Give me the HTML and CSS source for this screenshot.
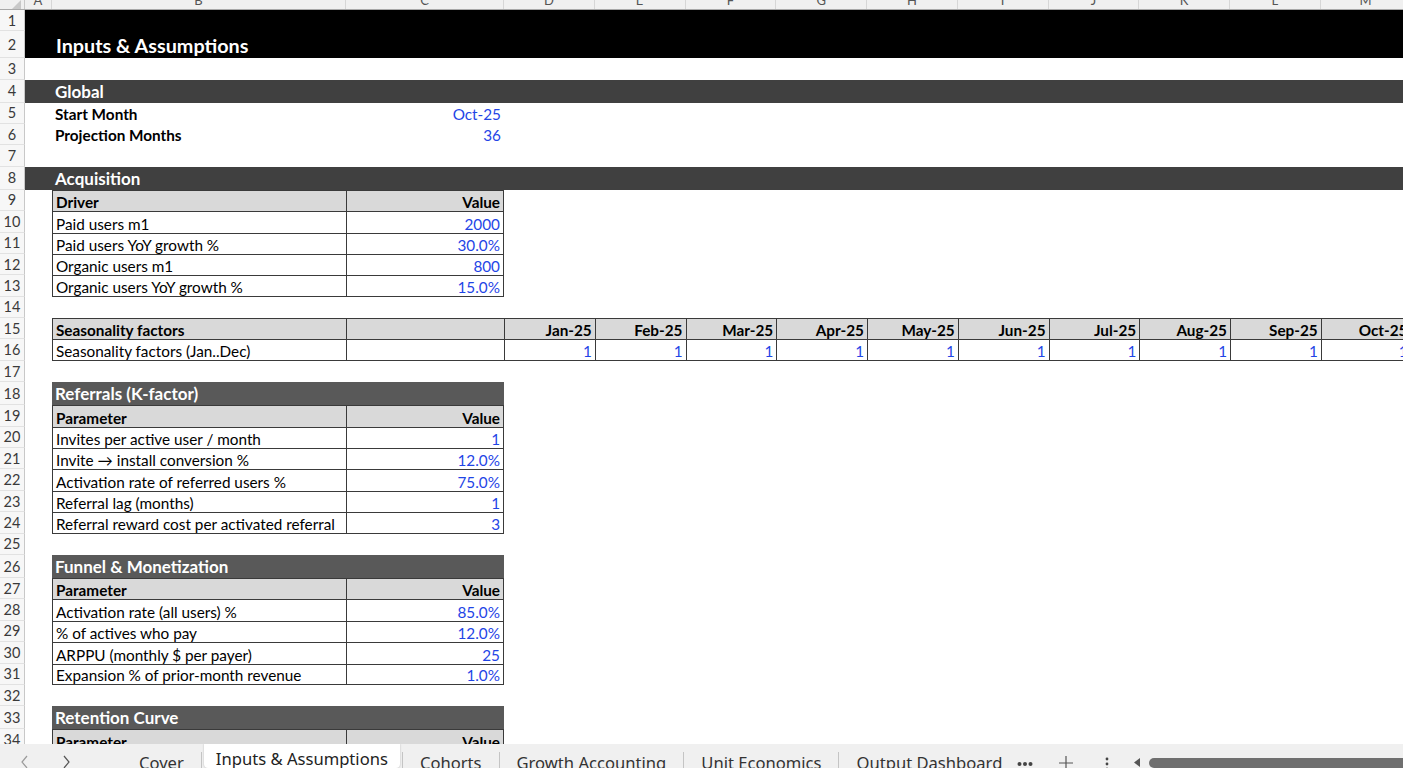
FILE: index.html
```html
<!DOCTYPE html>
<html>
<head>
<meta charset="utf-8">
<link rel="stylesheet" href="styles.css">
</head>
<body>
<div class="app">
  <div class="sheet">
    <div class="row colhdr">
      <div class="corner"><svg width="14" height="9" viewBox="0 0 14 9"><polygon points="13,0 13,9 4,9" fill="#c8c8c8"/></svg></div>
      <div class="ch"><span>A</span></div><div class="ch"><span>B</span></div><div class="ch"><span>C</span></div>
      <div class="ch"><span>D</span></div><div class="ch"><span>E</span></div><div class="ch"><span>F</span></div>
      <div class="ch"><span>G</span></div><div class="ch"><span>H</span></div><div class="ch"><span>I</span></div>
      <div class="ch"><span>J</span></div><div class="ch"><span>K</span></div><div class="ch"><span>L</span></div>
      <div class="ch"><span>M</span></div>
    </div>

    <div class="row r1"><div class="rn">1</div><div class="c black span-all"></div></div>
    <div class="row r2"><div class="rn">2</div><div class="c black span-all title">Inputs &amp; Assumptions</div></div>
    <div class="row r3"><div class="rn">3</div></div>
    <div class="row hdr"><div class="rn">4</div><div class="c bar span-all">Global</div></div>
    <div class="row"><div class="rn">5</div><div class="c"></div><div class="c bold">Start Month</div><div class="c rt blue">Oct-25</div></div>
    <div class="row"><div class="rn">6</div><div class="c"></div><div class="c bold">Projection Months</div><div class="c rt blue">36</div></div>
    <div class="row"><div class="rn">7</div></div>
    <div class="row hdr"><div class="rn">8</div><div class="c bar span-all">Acquisition</div></div>
    <div class="row"><div class="rn">9</div><div class="c"></div><div class="c t th">Driver</div><div class="c t th rt end">Value</div></div>
    <div class="row"><div class="rn">10</div><div class="c"></div><div class="c t">Paid users m1</div><div class="c t rt blue end">2000</div></div>
    <div class="row"><div class="rn">11</div><div class="c"></div><div class="c t">Paid users YoY growth %</div><div class="c t rt blue end">30.0%</div></div>
    <div class="row"><div class="rn">12</div><div class="c"></div><div class="c t">Organic users m1</div><div class="c t rt blue end">800</div></div>
    <div class="row last"><div class="rn">13</div><div class="c"></div><div class="c t">Organic users YoY growth %</div><div class="c t rt blue end">15.0%</div></div>
    <div class="row"><div class="rn">14</div></div>
    <div class="row"><div class="rn">15</div><div class="c"></div><div class="c t th">Seasonality factors</div><div class="c t th"></div>
      <div class="c t th rt">Jan-25</div><div class="c t th rt">Feb-25</div><div class="c t th rt">Mar-25</div><div class="c t th rt">Apr-25</div><div class="c t th rt">May-25</div>
      <div class="c t th rt">Jun-25</div><div class="c t th rt">Jul-25</div><div class="c t th rt">Aug-25</div><div class="c t th rt">Sep-25</div><div class="c t th rt end">Oct-25</div>
    </div>
    <div class="row last"><div class="rn">16</div><div class="c"></div><div class="c t">Seasonality factors (Jan..Dec)</div><div class="c t"></div>
      <div class="c t rt blue">1</div><div class="c t rt blue">1</div><div class="c t rt blue">1</div><div class="c t rt blue">1</div><div class="c t rt blue">1</div>
      <div class="c t rt blue">1</div><div class="c t rt blue">1</div><div class="c t rt blue">1</div><div class="c t rt blue">1</div><div class="c t rt blue end">1</div>
    </div>
    <div class="row"><div class="rn">17</div></div>
    <div class="row hdr"><div class="rn">18</div><div class="c"></div><div class="c bar2 span-bc">Referrals (K-factor)</div></div>
    <div class="row"><div class="rn">19</div><div class="c"></div><div class="c t th">Parameter</div><div class="c t th rt end">Value</div></div>
    <div class="row"><div class="rn">20</div><div class="c"></div><div class="c t">Invites per active user / month</div><div class="c t rt blue end">1</div></div>
    <div class="row"><div class="rn">21</div><div class="c"></div><div class="c t">Invite → install conversion %</div><div class="c t rt blue end">12.0%</div></div>
    <div class="row"><div class="rn">22</div><div class="c"></div><div class="c t">Activation rate of referred users %</div><div class="c t rt blue end">75.0%</div></div>
    <div class="row"><div class="rn">23</div><div class="c"></div><div class="c t">Referral lag (months)</div><div class="c t rt blue end">1</div></div>
    <div class="row last"><div class="rn">24</div><div class="c"></div><div class="c t">Referral reward cost per activated referral</div><div class="c t rt blue end">3</div></div>
    <div class="row"><div class="rn">25</div></div>
    <div class="row hdr"><div class="rn">26</div><div class="c"></div><div class="c bar2 span-bc">Funnel &amp; Monetization</div></div>
    <div class="row"><div class="rn">27</div><div class="c"></div><div class="c t th">Parameter</div><div class="c t th rt end">Value</div></div>
    <div class="row"><div class="rn">28</div><div class="c"></div><div class="c t">Activation rate (all users) %</div><div class="c t rt blue end">85.0%</div></div>
    <div class="row"><div class="rn">29</div><div class="c"></div><div class="c t">% of actives who pay</div><div class="c t rt blue end">12.0%</div></div>
    <div class="row"><div class="rn">30</div><div class="c"></div><div class="c t">ARPPU (monthly $ per payer)</div><div class="c t rt blue end">25</div></div>
    <div class="row last"><div class="rn">31</div><div class="c"></div><div class="c t">Expansion % of prior-month revenue</div><div class="c t rt blue end">1.0%</div></div>
    <div class="row"><div class="rn">32</div></div>
    <div class="row hdr"><div class="rn">33</div><div class="c"></div><div class="c bar2 span-bc">Retention Curve</div></div>
    <div class="row"><div class="rn">34</div><div class="c"></div><div class="c t th">Parameter</div><div class="c t th rt end">Value</div></div>
  </div>

  <div class="tabbar">
    <div class="nav">
      <svg class="chev" width="10" height="14" viewBox="0 0 10 14"><polyline points="7,1 2,7 7,13" fill="none" stroke="#9a9a9a" stroke-width="1.2"/></svg>
      <svg class="chev" width="10" height="14" viewBox="0 0 10 14"><polyline points="3,1 8,7 3,13" fill="none" stroke="#555" stroke-width="1.2"/></svg>
    </div>
    <div class="tab">Cover</div>
    <div class="sep"></div>
    <div class="tab active">Inputs &amp; Assumptions</div>
    <div class="sep"></div>
    <div class="tab">Cohorts</div>
    <div class="sep"></div>
    <div class="tab">Growth Accounting</div>
    <div class="sep"></div>
    <div class="tab">Unit Economics</div>
    <div class="sep"></div>
    <div class="tab">Output Dashboard</div>
    <svg class="more" width="16" height="6" viewBox="0 0 16 6"><circle cx="2.5" cy="3" r="2" fill="#444"/><circle cx="8" cy="3" r="2" fill="#444"/><circle cx="13.5" cy="3" r="2" fill="#444"/></svg>
    <svg class="plus" width="16" height="16" viewBox="0 0 16 16"><path d="M8 1v14M1 8h14" stroke="#555" stroke-width="1.2" fill="none"/></svg>
    <svg class="vdots" width="4" height="14" viewBox="0 0 4 14"><circle cx="2" cy="2" r="1.4" fill="#444"/><circle cx="2" cy="7" r="1.4" fill="#444"/><circle cx="2" cy="12" r="1.4" fill="#444"/></svg>
    <svg class="tri" width="6" height="9" viewBox="0 0 6 9"><polygon points="6,0 6,9 0,4.5" fill="#555"/></svg>
    <div class="thumb"></div>
  </div>
</div>
</body>
</html>
```

FILE: styles.css
```css
:root {
  --cols: 25px 27px 294px 158px repeat(10, 90.75px);
  --line: #3a3a3a;
}
body {
  margin: 0;
  font-family: Lato, "Liberation Sans", sans-serif;
  background: #fff;
}
.app {
  width: 1403px;
  height: 768px;
  overflow: hidden;
  display: flex;
  flex-direction: column;
  background: #fff;
}
.sheet {
  flex: none;
  height: 744px;
  overflow: hidden;
}
.row {
  display: grid;
  grid-template-columns: var(--cols);
  height: 21.4px;
  overflow: hidden;
}
.colhdr {
  height: 10px;
  background: #f0f0f0;
  border-bottom: 1px solid #a8a8a8;
  box-sizing: border-box;
}
.corner {
  display: flex;
  justify-content: flex-end;
  align-items: flex-end;
  border-right: 1px solid #c8c8c8;
  padding: 0 2px 0 0;
}
.corner svg { display: block; }
.ch {
  display: flex;
  justify-content: center;
  align-items: flex-end;
  border-right: 1px solid #d6d6d6;
  overflow: hidden;
  font-size: 13px;
  color: #555;
}
.ch span {
  line-height: 13px;
  margin-bottom: 2px;
}
.r1 { height: 21.3px; }
.r2 { height: 26.7px; }
.r3 { height: 21.6px; }
.hdr { height: 23px; }

.rn {
  background: #f7f7f7;
  border-right: 1px solid #c8c8c8;
  border-bottom: 1px solid #e2e2e2;
  box-sizing: border-box;
  display: flex;
  align-items: center;
  justify-content: center;
  font-size: 14.5px;
  color: #3a3a3a;
}
.c {
  display: flex;
  align-items: flex-end;
  padding: 0 3px 1px;
  font-size: 15.3px;
  line-height: 18px;
  white-space: nowrap;
  overflow: hidden;
  box-sizing: border-box;
  min-width: 0;
  color: #000;
}
.span-all { grid-column: 2 / -1; }
.span-bc { grid-column: 3 / 5; }
.black { background: #000; color: #fff; }
.title {
  font-size: 19.8px;
  font-weight: 700;
  padding-left: 31px;
  padding-bottom: 2px;
  line-height: 22px;
}
.bar {
  background: #404040;
  color: #fff;
  font-weight: 700;
  font-size: 17px;
  padding-left: 30px;
  line-height: 20px;
  padding-bottom: 1px;
}
.bar2 {
  background: #595959;
  color: #fff;
  font-weight: 700;
  font-size: 17px;
  line-height: 20px;
  padding-bottom: 1px;
}
.bold { font-weight: 700; }
.rt { justify-content: flex-end; }
.blue { color: #1f45e6; }
.t {
  border-left: 1px solid var(--line);
  border-top: 1px solid var(--line);
  padding-bottom: 0;
}
.t.end { border-right: 1px solid var(--line); }
.last .t { border-bottom: 1px solid var(--line); padding-bottom: 0; }
.th {
  background: #d9d9d9;
  font-weight: 700;
}

.tabbar {
  flex: none;
  height: 24px;
  background: #f0f0f0;
  display: flex;
  align-items: flex-start;
  font-family: "Noto Sans", "Open Sans", sans-serif;
  font-size: 16.6px;
  color: #333;
  overflow: hidden;
  white-space: nowrap;
}
.nav {
  width: 124px;
  flex: none;
  display: flex;
  padding: 11px 0 0 20px;
  gap: 31px;
  box-sizing: border-box;
}
.chev { display: block; }
.tab {
  flex: none;
  padding: 9px 15px 0;
  line-height: 20px;
}
.tab.active {
  background: #fff;
  padding: 5px 12px 0;
  height: 24px;
  box-sizing: border-box;
  border-radius: 0 0 4px 4px;
  box-shadow: 0 0 2px rgba(0,0,0,0.25);
  color: #222;
}
.sep {
  flex: none;
  width: 1px;
  height: 16px;
  background: #c4c4c4;
  margin: 8px 2px 0;
}
.more { flex: none; margin: 17px 0 0 0; display: block; }
.plus { flex: none; margin: 11px 0 0 25px; display: block; }
.vdots { flex: none; margin: 13px 0 0 31px; display: block; }
.tri { flex: none; margin: 14px 0 0 25px; display: block; }
.thumb {
  flex: none;
  width: 270px;
  height: 10px;
  margin: 14px 0 0 9px;
  background: #6f6f6f;
  border-radius: 5px 0 0 5px;
}
```
